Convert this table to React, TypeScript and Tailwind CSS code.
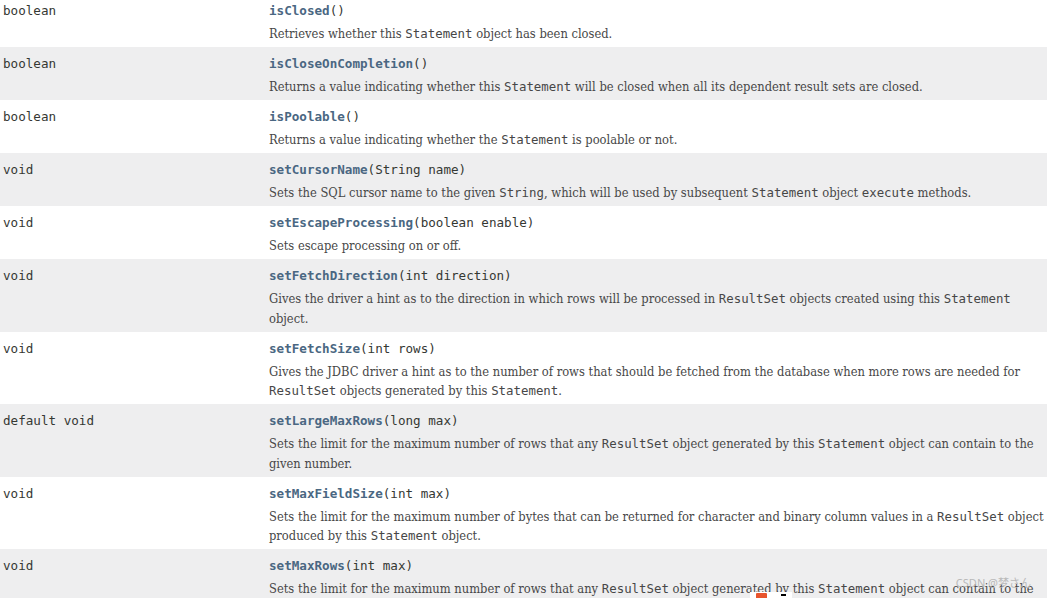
const mono = "font-['DejaVu_Sans_Mono',monospace]";

type Part = string | { c: string };
type Row = { type: string; name: string; params: string; lines: Part[][] };

const S = { c: "Statement" };
const RS = { c: "ResultSet" };

const rows: Row[] = [
  { type: "boolean", name: "isClosed", params: "()", lines: [["Retrieves whether this ", S, " object has been closed."]] },
  {
    type: "boolean",
    name: "isCloseOnCompletion",
    params: "()",
    lines: [["Returns a value indicating whether this ", S, " will be closed when all its dependent result sets are closed."]],
  },
  { type: "boolean", name: "isPoolable", params: "()", lines: [["Returns a value indicating whether the ", S, " is poolable or not."]] },
  {
    type: "void",
    name: "setCursorName",
    params: "(String name)",
    lines: [["Sets the SQL cursor name to the given ", { c: "String" }, ", which will be used by subsequent ", S, " object ", { c: "execute" }, " methods."]],
  },
  { type: "void", name: "setEscapeProcessing", params: "(boolean enable)", lines: [["Sets escape processing on or off."]] },
  {
    type: "void",
    name: "setFetchDirection",
    params: "(int direction)",
    lines: [
      ["Gives the driver a hint as to the direction in which rows will be processed in ", RS, " objects created using this ", S],
      ["object."],
    ],
  },
  {
    type: "void",
    name: "setFetchSize",
    params: "(int rows)",
    lines: [
      ["Gives the JDBC driver a hint as to the number of rows that should be fetched from the database when more rows are needed for"],
      [RS, " objects generated by this ", S, "."],
    ],
  },
  {
    type: "default void",
    name: "setLargeMaxRows",
    params: "(long max)",
    lines: [
      ["Sets the limit for the maximum number of rows that any ", RS, " object generated by this ", S, " object can contain to the"],
      ["given number."],
    ],
  },
  {
    type: "void",
    name: "setMaxFieldSize",
    params: "(int max)",
    lines: [
      ["Sets the limit for the maximum number of bytes that can be returned for character and binary column values in a ", RS, " object"],
      ["produced by this ", S, " object."],
    ],
  },
  {
    type: "void",
    name: "setMaxRows",
    params: "(int max)",
    lines: [
      ["Sets the limit for the maximum number of rows that any ", RS, " object generated by this ", S, " object can contain to the"],
      ["given number."],
    ],
  },
];

const Line = ({ parts }: { parts: Part[] }) => (
  <div className="whitespace-nowrap">
    {parts.map((p, i) =>
      typeof p === "string" ? (
        <span key={i}>{p}</span>
      ) : (
        <code key={i} className={`${mono} text-[12.4px]`}>
          {p.c}
        </code>
      )
    )}
  </div>
);

export default function App() {
  return (
    <div className="relative h-[598px] w-[1047px] overflow-hidden bg-white">
      <div className="-mt-[6px]">
        {rows.map((r, i) => (
          <div key={r.name} className={`flex pt-[7px] pb-[3.5px] ${i % 2 === 1 ? "bg-[#eeeeef]" : "bg-white"}`}>
            <div className={`w-[269px] shrink-0 pl-[3px] leading-[20px] text-[12.6px] text-[#353833] ${mono}`}>{r.type}</div>
            <div className="flex-1">
              <div className={`leading-[20px] text-[12.6px] text-[#353833] ${mono}`}>
                <span className="font-bold text-[#4a6782]">{r.name}</span>
                {r.params}
              </div>
              <div className="mt-[3px] font-['DejaVu_Serif',Georgia,serif] text-[12.8px] leading-[19.5px] text-[#474747] [font-stretch:condensed]">
                {r.lines.map((l, j) => (
                  <Line key={j} parts={l} />
                ))}
              </div>
            </div>
          </div>
        ))}
      </div>
      <div className="absolute right-[16px] top-[575px] font-['Noto_Sans','Noto_Sans_CJK_JP',sans-serif] text-[11px] text-[#b9b9b9]">
        CSDN @梦さん
      </div>
      <div className="absolute left-[750px] top-[592px] flex h-[8px] w-[42px] items-start gap-[14px] bg-white pl-[6px]">
        <div className="mt-[1px] h-[7px] w-[11px] rounded-[1px] bg-[#e8542c]" />
        <div className="mt-[2px] h-[2px] w-[5px] bg-black" />
      </div>
    </div>
  );
}
